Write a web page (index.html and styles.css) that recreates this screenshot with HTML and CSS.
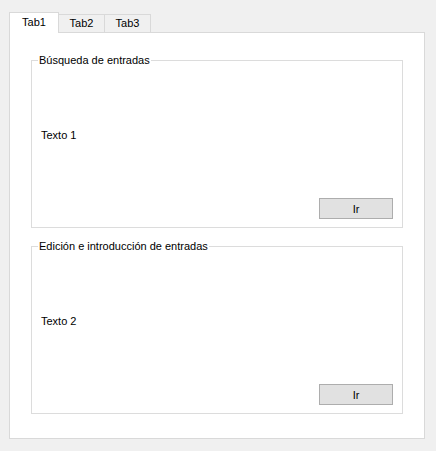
FILE: index.html
```html
<!DOCTYPE html>
<html>
<head>
<meta charset="utf-8">
<link rel="stylesheet" href="styles.css">
</head>
<body>
<div class="window">
  <div class="tabs">
    <div class="tab tab-active">Tab1</div>
    <div class="tab">Tab2</div>
    <div class="tab">Tab3</div>
  </div>
  <div class="panel">
    <fieldset class="group">
      <legend class="group-title">Búsqueda de entradas</legend>
      <div class="group-body">
        <div class="label">Texto 1</div>
        <button class="btn">Ir</button>
      </div>
    </fieldset>
    <fieldset class="group">
      <legend class="group-title">Edición e introducción de entradas</legend>
      <div class="group-body">
        <div class="label">Texto 2</div>
        <button class="btn">Ir</button>
      </div>
    </fieldset>
  </div>
</div>
</body>
</html>
```

FILE: styles.css
```css
html, body {
  margin: 0;
  padding: 0;
  background: #f0f0f0;
}
body {
  font-family: "Segoe UI", "Liberation Sans", Arial, sans-serif;
  font-size: 11px;
  color: #000;
}
.window {
  padding: 12px 11px 12px 9px;
}
.tabs {
  display: flex;
  align-items: flex-end;
  height: 21px;
  margin-bottom: -1px;
  position: relative;
  z-index: 1;
}
.tab {
  box-sizing: border-box;
  width: 46px;
  height: 18px;
  margin-bottom: 1px;
  border: 1px solid #d9d9d9;
  border-left: none;
  border-bottom: none;
  background: #f0f0f0;
  display: flex;
  align-items: center;
  justify-content: center;
  line-height: 15px;
}
.tab-active {
  width: 50px;
  height: 21px;
  margin-bottom: 0;
  border-left: 1px solid #d9d9d9;
  background: #fff;
  padding-bottom: 1px;
}
.panel {
  box-sizing: border-box;
  width: 416px;
  height: 407px;
  background: #fff;
  border: 1px solid #d9d9d9;
  padding: 20px 21px 0 21px;
  display: flex;
  flex-direction: column;
  gap: 11px;
}
.group {
  margin: 0;
  padding: 0;
  border: 1px solid #dcdcdc;
  min-width: 0;
}
.group-title {
  margin-left: 6px;
  padding: 0 1px;
  line-height: 15px;
}
.group-body {
  box-sizing: border-box;
  height: 159px;
  display: flex;
  flex-direction: column;
  padding: 0 9px 8px 9px;
}
.label {
  margin-top: 59px;
  line-height: 16px;
}
.btn {
  margin-top: auto;
  align-self: flex-end;
  box-sizing: border-box;
  width: 74px;
  height: 21px;
  background: #e1e1e1;
  border: 1px solid #adadad;
  border-radius: 0;
  font-family: inherit;
  font-size: 11px;
  padding: 0;
  color: #000;
}
```
